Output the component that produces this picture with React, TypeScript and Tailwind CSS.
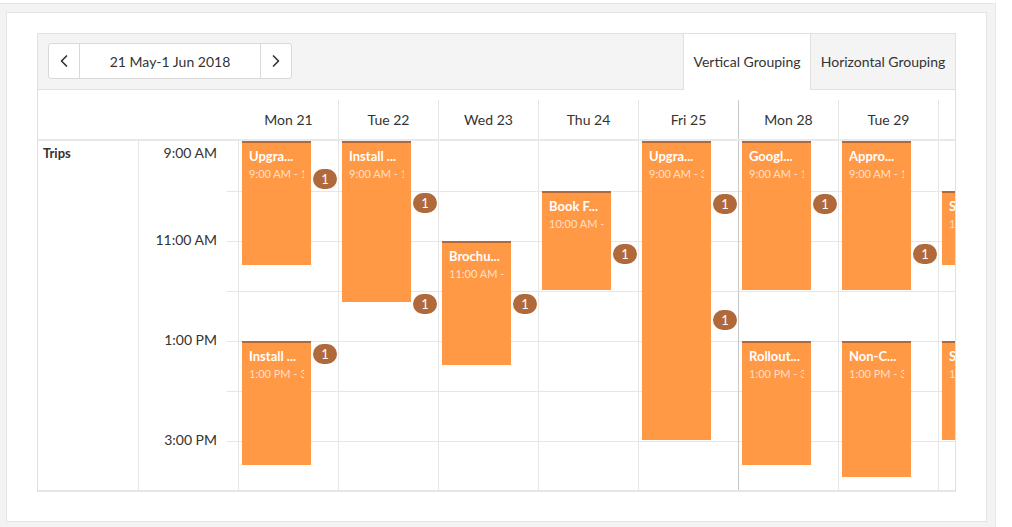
import { ChevronLeft, ChevronRight } from "lucide-react";

type Ev = { title: string; time: string; top: number; height: number };
type Day = { label: string; events: Ev[]; badges: number[]; weekEnd?: boolean };

const days: Day[] = [
  {
    label: "Mon 21",
    events: [
      { title: "Upgra...", time: "9:00 AM - 11:30 AM", top: 0, height: 124 },
      { title: "Install ...", time: "1:00 PM - 3:30 PM", top: 200, height: 124 },
    ],
    badges: [28, 203],
  },
  {
    label: "Tue 22",
    events: [{ title: "Install ...", time: "9:00 AM - 12:15 PM", top: 0, height: 161 }],
    badges: [52, 153],
  },
  {
    label: "Wed 23",
    events: [{ title: "Brochu...", time: "11:00 AM - 1:30 PM", top: 100, height: 124 }],
    badges: [153],
  },
  {
    label: "Thu 24",
    events: [{ title: "Book F...", time: "10:00 AM - 12:00 PM", top: 50, height: 99 }],
    badges: [103],
  },
  {
    label: "Fri 25",
    events: [{ title: "Upgra...", time: "9:00 AM - 3:00 PM", top: 0, height: 299 }],
    badges: [53, 169],
    weekEnd: true,
  },
  {
    label: "Mon 28",
    events: [
      { title: "Googl...", time: "9:00 AM - 12:00 PM", top: 0, height: 149 },
      { title: "Rollout...", time: "1:00 PM - 3:30 PM", top: 200, height: 124 },
    ],
    badges: [53],
  },
  {
    label: "Tue 29",
    events: [
      { title: "Appro...", time: "9:00 AM - 12:00 PM", top: 0, height: 149 },
      { title: "Non-C...", time: "1:00 PM - 3:45 PM", top: 200, height: 136 },
    ],
    badges: [103],
  },
  {
    label: "Wed 30",
    events: [
      { title: "S...", time: "10:00 AM - 11:30 AM", top: 50, height: 74 },
      { title: "S...", time: "1:00 PM - 3:00 PM", top: 200, height: 99 },
    ],
    badges: [],
  },
];

const hours = ["9:00 AM", "", "11:00 AM", "", "1:00 PM", "", "3:00 PM"];

const EventBox = ({ ev }: { ev: Ev }) => (
  <div
    className="absolute left-[3px] w-[69px] bg-[#ff9946] border-t-2 border-[#b0693a] px-[7px] pt-[5px] overflow-hidden"
    style={{ top: ev.top, height: ev.height }}
  >
    <div className="overflow-hidden whitespace-nowrap text-[13px] leading-[17px] font-bold text-white">
      {ev.title}
    </div>
    <div className="overflow-hidden whitespace-nowrap text-[11px] leading-[15px] mt-[1px] text-white/70">
      {ev.time}
    </div>
  </div>
);

const Badge = ({ top }: { top: number }) => (
  <div
    className="absolute left-[74px] w-[24px] h-[20px] rounded-full bg-[#b0693a] text-white text-[13px] leading-[20px] text-center"
    style={{ top }}
  >
    1
  </div>
);

export default function App() {
  return (
    <div
      className="w-[1012px] h-[527px] bg-white overflow-hidden text-[#333]"
      style={{ fontFamily: "Lato, 'Noto Sans', sans-serif" }}
    >
      <div className="mt-[3px] w-[996px] h-[524px] bg-[#f3f3f3] border-t border-r border-[#e6e6e6] pl-[6px] pt-[8px]">
        <div className="w-[981px] h-[510px] bg-white border border-[#e4e4e4] pl-[30px] pt-[20px]">
          <div className="w-[919px] border-l border-r border-t border-[#e0e0e0] flex flex-col">
            {/* toolbar */}
            <div className="h-[56px] flex bg-[#f4f4f4]">
              <div className="flex-1 border-b border-[#e0e0e0] pl-[10px] pt-[9px]">
                <div className="w-[244px] h-[36px] flex bg-white border border-[#d9d9d9] rounded-[3px] text-[14px]">
                  <div className="w-[31px] border-r border-[#d9d9d9] flex items-center justify-center">
                    <ChevronLeft size={20} strokeWidth={2} className="text-[#333]" />
                  </div>
                  <div className="flex-1 flex items-center justify-center">21 May-1 Jun 2018</div>
                  <div className="w-[31px] border-l border-[#d9d9d9] flex items-center justify-center">
                    <ChevronRight size={20} strokeWidth={2} className="text-[#333]" />
                  </div>
                </div>
              </div>
              <div className="w-[127px] bg-white border-l border-[#e0e0e0] flex items-center justify-center text-[14px] pb-[1px]">
                Vertical Grouping
              </div>
              <div className="w-[145px] border-l border-b border-[#e0e0e0] flex items-center justify-center text-[14px]">
                Horizontal Grouping
              </div>
            </div>

            {/* header */}
            <div className="h-[51px] flex border-b-2 border-[#e8e8e8]">
              <div className="w-[201px] shrink-0" />
              <div className="flex-1 min-w-0 overflow-hidden flex">
                {days.map((d) => (
                  <div key={d.label} className="w-[100px] shrink-0 pt-[10px]">
                    <div
                      className={`h-full border-r flex items-center justify-center text-[14px] ${
                        d.weekEnd ? "border-[#c8c8c8]" : "border-[#e6e6e6]"
                      }`}
                    >
                      {d.label}
                    </div>
                  </div>
                ))}
              </div>
            </div>

            {/* body */}
            <div className="h-[351px] flex border-b-2 border-[#e6e6e6]">
              <div className="w-[101px] shrink-0 border-r border-[#e6e6e6] pl-[5px] pt-[3px]">
                <div className="text-[13px] leading-[18px] font-bold">Trips</div>
              </div>
              <div className="w-[100px] shrink-0 border-r border-[#e6e6e6] flex flex-col">
                {hours.map((h, i) => (
                  <div key={i} className="h-[50px] flex shrink-0">
                    <div className="flex-1 pr-[10px] text-right text-[14px] leading-[20px] whitespace-nowrap">
                      {h && <div className={i === 0 ? "mt-[2px]" : "-mt-[11px]"}>{h}</div>}
                    </div>
                    <div className={`w-[11px] ${i > 0 ? "border-t border-[#e6e6e6]" : ""}`} />
                  </div>
                ))}
              </div>
              <div className="flex-1 min-w-0 overflow-hidden flex">
                {days.map((d) => (
                  <div
                    key={d.label}
                    className={`relative w-[100px] shrink-0 border-r flex flex-col ${
                      d.weekEnd ? "border-[#c8c8c8]" : "border-[#e6e6e6]"
                    }`}
                  >
                    {hours.map((_, i) => (
                      <div
                        key={i}
                        className={`h-[50px] shrink-0 ${i > 0 ? "border-t border-[#e6e6e6]" : ""}`}
                      />
                    ))}
                    {d.events.map((ev, i) => (
                      <EventBox key={i} ev={ev} />
                    ))}
                    {d.badges.map((t, i) => (
                      <Badge key={i} top={t} />
                    ))}
                  </div>
                ))}
              </div>
            </div>
          </div>
        </div>
      </div>
    </div>
  );
}
